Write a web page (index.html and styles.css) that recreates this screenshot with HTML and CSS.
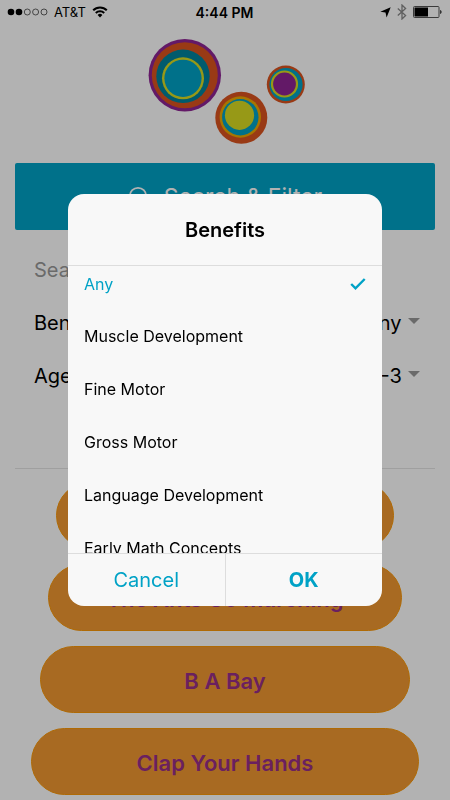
FILE: index.html
```html
<!DOCTYPE html>
<html lang="en">
<head>
<meta charset="utf-8">
<meta name="viewport" content="width=device-width, initial-scale=1">
<title>Search &amp; Filter</title>
<link rel="stylesheet" href="styles.css">
</head>
<body>
<div class="page">
  <header class="status">
    <div class="status-side">
      <svg width="41" height="8" viewBox="0 0 41 8" aria-hidden="true">
        <circle cx="4" cy="4" r="3.3"/><circle cx="12" cy="4" r="3.3"/>
        <g fill="none" stroke="#222" stroke-width=".7"><circle cx="20.3" cy="4" r="3"/><circle cx="28.6" cy="4" r="3"/><circle cx="37" cy="4" r="3"/></g>
      </svg>
      <span>AT&amp;T</span>
      <svg width="16" height="12" viewBox="0 0 16 12" fill="none" stroke="#000" stroke-width="2" aria-hidden="true">
        <path d="M1.2 4.3a9.6 9.6 0 0 1 13.6 0M3.8 7a5.9 5.9 0 0 1 8.4 0"/><path d="M5.6 8.9a3.4 3.4 0 0 1 4.8 0L8 11.4z" fill="#000" stroke="none"/>
      </svg>
    </div>
    <strong class="clock">4:44 PM</strong>
    <div class="status-side status-end">
      <svg width="11" height="11" viewBox="0 0 11 11" aria-hidden="true"><path d="M10.7.3 6.6 10.6 5.5 5.6.3 4.8z"/></svg>
      <svg width="10" height="16" viewBox="0 0 10 16" fill="none" stroke="#888" stroke-width="1.3" aria-hidden="true"><path d="M.8 4.4 8.6 11.5 5 15V1l3.6 3.5L.8 11.6"/></svg>
      <svg width="29" height="12" viewBox="0 0 29 12" aria-hidden="true">
        <rect x=".5" y=".5" width="25.5" height="11" rx="1" fill="none" stroke="#555"/><path d="M1.5 1.5H15v9H1.5zM27.3 4c1.6.4 1.6 3.6 0 4z"/>
      </svg>
    </div>
  </header>

  <main>
    <svg class="logo" width="160" height="107" viewBox="145 38 160 107" role="img" aria-label="Logo">
      <circle cx="184.800" cy="75.200" r="36.200" fill="#8e2494"/>
      <circle cx="184.800" cy="75.200" r="33" fill="#db541f"/>
      <circle cx="183" cy="76.300" r="26.700" fill="#00839c"/>
      <circle cx="183" cy="78.300" r="21" fill="#d9dc22"/>
      <circle cx="183" cy="78.300" r="18.600" fill="#00a2c6"/>
      <circle cx="241.300" cy="117.700" r="26" fill="#db541f"/>
      <circle cx="240.300" cy="117" r="20.700" fill="#f0a900"/>
      <circle cx="240.300" cy="117.200" r="18.200" fill="#00a2c6"/>
      <circle cx="239.500" cy="115.300" r="14.600" fill="#d9dc22"/>
      <circle cx="285.800" cy="84.500" r="19" fill="#db541f"/>
      <circle cx="286" cy="84.500" r="16.600" fill="#00a2c6"/>
      <circle cx="284.500" cy="84" r="13.600" fill="#d9dc22"/>
      <circle cx="284.500" cy="84" r="11.400" fill="#8e2494"/>
    </svg>

    <button class="filter-toggle" type="button">
      <svg width="22" height="22" viewBox="0 0 22 22" fill="none" stroke="#fff" stroke-width="1.8" aria-hidden="true"><circle cx="10" cy="10" r="8.200"/><path d="m16 16 5 5"/></svg>
      Search &amp; Filter
    </button>

    <form class="filters">
      <input class="search" type="search" placeholder="Search" aria-label="Search">
      <div class="field">
        <label for="benefits">Benefits</label>
        <select id="benefits"><option>Any</option></select>
        <svg width="12" height="6" viewBox="0 0 12 6" aria-hidden="true"><path d="M0 0h12L6 6z" fill="#999"/></svg>
      </div>
      <div class="field">
        <label for="age">Age</label>
        <select id="age"><option>0-3</option></select>
        <svg width="12" height="6" viewBox="0 0 12 6" aria-hidden="true"><path d="M0 0h12L6 6z" fill="#999"/></svg>
      </div>
    </form>

    <div class="songs">
      <button class="song song-1" type="button"></button>
      <button class="song song-2" type="button">The Ants Go Marching</button>
      <button class="song song-3" type="button">B A Bay</button>
      <button class="song song-4" type="button">Clap Your Hands</button>
    </div>
  </main>
</div>

<div class="backdrop">
  <form class="dialog" role="dialog" aria-labelledby="dialog-title">
    <h2 id="dialog-title">Benefits</h2>
    <div class="options">
      <label class="option"><input type="radio" name="benefit" checked><span>Any</span>
        <svg width="16" height="12" viewBox="0 0 16 12" fill="none" stroke="#00a2c6" stroke-width="2.400" aria-hidden="true"><path d="m1.200 6 4.300 4.300L14.700 1"/></svg></label>
      <label class="option"><input type="radio" name="benefit"><span>Muscle Development</span></label>
      <label class="option"><input type="radio" name="benefit"><span>Fine Motor</span></label>
      <label class="option"><input type="radio" name="benefit"><span>Gross Motor</span></label>
      <label class="option"><input type="radio" name="benefit"><span>Language Development</span></label>
      <label class="option"><input type="radio" name="benefit"><span>Early Math Concepts</span></label>
    </div>
    <div class="actions">
      <button type="button">Cancel</button>
      <button class="ok" type="button">OK</button>
    </div>
  </form>
</div>
</body>
</html>
```
FILE: styles.css
```css
* { box-sizing: border-box; }

body {
  margin: 0;
  background: #fff;
  color: #000;
  font-family: Inter, "Liberation Sans", sans-serif;
}

button, input, select {
  margin: 0;
  padding: 0;
  border: 0;
  background: none;
  color: inherit;
  font: inherit;
}

svg { display: block; flex: none; }

.status {
  display: flex;
  align-items: center;
  height: 24px;
  padding: 0 8px 0 7px;
  font-size: 13px;
}
.status-side {
  display: flex;
  flex: 1;
  align-items: center;
  gap: 6px;
}
.status-end { justify-content: flex-end; }
.clock {
  font-size: 14px;
  font-weight: 600;
}

.logo { margin: 14px auto 18px; }

.filter-toggle {
  display: flex;
  align-items: center;
  justify-content: center;
  gap: 14px;
  width: calc(100% - 30px);
  height: 67px;
  margin: 0 15px;
  border-radius: 2px;
  background: #00a2c6;
  color: #fff;
  font-size: 23px;
}

.filters {
  margin: 0 15px 13px;
  padding: 13px 15px 66px 19px;
  border-bottom: 1px solid #e4e4e4;
  font-size: 20px;
}
.search {
  display: block;
  width: 100%;
  height: 53px;
}
.search::placeholder { color: #999; opacity: 1; }
.field {
  display: flex;
  align-items: center;
  gap: 6px;
  height: 53px;
}
.field label { flex: 1; }
.field select { appearance: none; }
.field svg { margin-bottom: 4px; }

.songs {
  display: grid;
  gap: 15px;
}
.song {
  height: 67px;
  padding-top: 2px;
  border: 1px solid #fb9808;
  border-radius: 34px;
  background: #f19931;
  color: #992e89;
  font-size: 22px;
  font-weight: 600;
}
.song-1 { margin: 0 56px; }
.song-2 { margin: 0 48px; }
.song-3 { margin: 0 40px; }
.song-4 { margin: 0 31px; }

.backdrop {
  position: fixed;
  inset: 0;
  display: grid;
  place-items: center;
  background: rgba(0, 0, 0, .3);
}
.dialog {
  width: calc(100% - 136px);
  max-width: 400px;
  overflow: hidden;
  border-radius: 16px;
  background: #f8f8f8;
}
.dialog h2 {
  margin: 0;
  padding: 23px 16px 21px;
  border-bottom: 1px solid #ddd;
  font-size: 20px;
  font-weight: 600;
  line-height: 27px;
  text-align: center;
}
.options {
  height: calc(36vh - 1px);
  overflow: hidden;
}
.option {
  display: flex;
  align-items: center;
  justify-content: space-between;
  height: 53px;
  padding: 0 16px;
  font-size: 16px;
}
.option:first-child {
  height: 43px;
  padding-bottom: 7px;
}
.option input {
  position: absolute;
  appearance: none;
}
.option input:checked + span { color: #00a2c6; }

.actions {
  display: flex;
  height: 53px;
  border-top: 1px solid #ddd;
  color: #00a2c6;
  font-size: 20px;
}
.actions button { flex: 1; }
.actions .ok {
  border-left: 1px solid #ddd;
  font-weight: 700;
}
```
